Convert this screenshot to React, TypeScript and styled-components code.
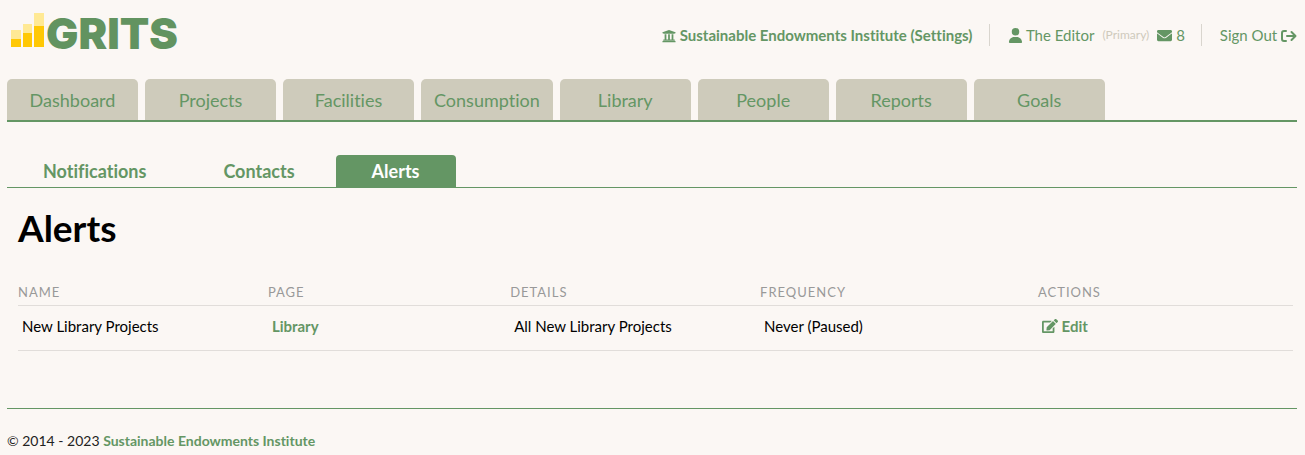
import React from "react";
import styled, { createGlobalStyle } from "styled-components";
import { FaEdit, FaEnvelope, FaUniversity } from "react-icons/fa";
import { FaUser } from "react-icons/fa6";

const green = "#649664";
const paper = "#fbf7f4";

const GlobalStyle = createGlobalStyle`
  * { box-sizing: border-box; }
  body {
    margin: 0;
    background: ${paper};
    color: #000;
    font: 14px/20px Lato, "Open Sans", sans-serif;
    font-variant-ligatures: none;
  }
`;

const Page = styled.div`
  padding: 0 8px 0 7px;
`;

const Link = styled.a<{ $strong?: boolean }>`
  color: ${green};
  font-weight: ${(p) => (p.$strong ? 700 : 400)};
  text-decoration: none;
  svg { vertical-align: -2px; }
`;

const Header = styled.header`
  display: flex;
  justify-content: space-between;
  align-items: flex-start;
  height: 79px;
`;

const Logo = styled.a`
  display: flex;
  align-items: flex-start;
  gap: 1px;
  padding: 12px 0 0 4px;
  color: #629360;
  font: 900 43px/42px Inter, "Liberation Sans", sans-serif;
  text-decoration: none;
`;

const Account = styled.div`
  display: flex;
  padding-top: 24px;
  font-size: 15px;
  line-height: 22px;
`;

const AccountItem = styled.div`
  display: flex;
  align-items: center;
  padding: 0 16px 0 18px;
  border-right: 1px solid #d9d5ce;
  white-space: pre;
  &:last-child { padding-right: 0; border-right: 0; }
`;

const Role = styled.small`
  padding: 0 8px;
  color: #cfcabc;
  font-size: 12px;
`;

const Tabs = styled.nav`
  display: flex;
  gap: 7px;
  border-bottom: 2px solid ${green};
`;

const Tab = styled.a`
  min-width: 131px;
  padding: 10px 13px 9px;
  border-radius: 5px 5px 0 0;
  background: #cecbbb;
  color: ${green};
  font-size: 18px;
  line-height: 22px;
  text-align: center;
  text-decoration: none;
`;

const SubTabs = styled.nav`
  display: flex;
  gap: 5px;
  margin-top: 33px;
  border-bottom: 1px solid ${green};
`;

const SubTab = styled.a<{ $active?: boolean }>`
  padding: 5px 36px;
  border-radius: 4px 4px 0 0;
  background: ${(p) => (p.$active ? green : "transparent")};
  color: ${(p) => (p.$active ? "#fff" : green)};
  font-size: 18px;
  font-weight: 700;
  line-height: 22px;
  text-decoration: none;
`;

const Main = styled.main`
  padding: 16px 4px 57px 11px;
`;

const Title = styled.h1`
  margin: 0;
  font-size: 37px;
  line-height: 48px;
`;

const Table = styled.table`
  width: 100%;
  margin-top: 30px;
  border-collapse: collapse;
  table-layout: fixed;
`;

const Column = styled.col<{ $share: number }>`
  width: ${(p) => p.$share}%;
`;

const HeadCell = styled.th`
  padding: 0 0 3px;
  border-bottom: 1px solid #e1ddda;
  color: #999;
  font-size: 13px;
  font-weight: 400;
  letter-spacing: 1px;
  text-align: left;
  text-transform: uppercase;
`;

const Cell = styled.td`
  height: 45px;
  padding: 0 4px 5px;
  border-bottom: 1px solid #e1ddda;
  font-size: 15px;
`;

const Footer = styled.footer`
  padding: 22px 0 4px;
  border-top: 1px solid ${green};
  color: #222;
`;

const sections = ["Dashboard", "Projects", "Facilities", "Consumption", "Library", "People", "Reports", "Goals"];
const subSections = ["Notifications", "Contacts", "Alerts"];
const columns = [
  { label: "Name", share: 19.6 },
  { label: "Page", share: 19 },
  { label: "Details", share: 19.6 },
  { label: "Frequency", share: 21.8 },
  { label: "Actions", share: 20 },
];

function Bars() {
  return (
    <svg width="34" height="36" viewBox="0 0 34 36" aria-hidden="true">
      <path fill="#ffe994" d="M0 18h10v9H0zM12 12h9v9h-9zM23 1h10v13H23z" />
      <path fill="#ffc805" d="M0 27h10v8H0zM12 21h9v14h-9zM23 14h10v21H23z" />
    </svg>
  );
}

function SignOutIcon() {
  return (
    <svg width="16" height="14" viewBox="0 0 16 14" fill="none" stroke="currentColor" strokeWidth="2" aria-hidden="true">
      <path strokeLinecap="round" d="M5 2H3a2 2 0 0 0-2 2v6a2 2 0 0 0 2 2h2M6 7h8" />
      <path strokeLinecap="round" strokeLinejoin="round" d="M10.500 3L14.500 7l-4 4" />
    </svg>
  );
}

export default function App() {
  return (
    <>
      <GlobalStyle />
      <Page>
        <Header>
          <Logo href="#"><Bars />GRITS</Logo>
          <Account>
            <AccountItem>
              <Link href="#" $strong><FaUniversity size={14} /> Sustainable Endowments Institute (Settings)</Link>
            </AccountItem>
            <AccountItem>
              <Link href="#"><FaUser size={15} /> The Editor</Link>
              <Role>(Primary)</Role>
              <Link href="#"><FaEnvelope size={15} /> 8</Link>
            </AccountItem>
            <AccountItem>
              <Link href="#">Sign Out <SignOutIcon /></Link>
            </AccountItem>
          </Account>
        </Header>
        <Tabs>
          {sections.map((name) => <Tab href="#" key={name}>{name}</Tab>)}
        </Tabs>
        <SubTabs>
          {subSections.map((name) => (
            <SubTab href="#" key={name} $active={name === "Alerts"}>{name}</SubTab>
          ))}
        </SubTabs>
        <Main>
          <Title>Alerts</Title>
          <Table>
            <colgroup>
              {columns.map((c) => <Column key={c.label} $share={c.share} />)}
            </colgroup>
            <thead>
              <tr>{columns.map((c) => <HeadCell key={c.label} scope="col">{c.label}</HeadCell>)}</tr>
            </thead>
            <tbody>
              <tr>
                <Cell>New Library Projects</Cell>
                <Cell><Link href="#" $strong>Library</Link></Cell>
                <Cell>All New Library Projects</Cell>
                <Cell>Never (Paused)</Cell>
                <Cell><Link href="#" $strong><FaEdit size={16} /> Edit</Link></Cell>
              </tr>
            </tbody>
          </Table>
        </Main>
        <Footer>
          © 2014 - 2023 <Link href="#" $strong>Sustainable Endowments Institute</Link>
        </Footer>
      </Page>
    </>
  );
}
